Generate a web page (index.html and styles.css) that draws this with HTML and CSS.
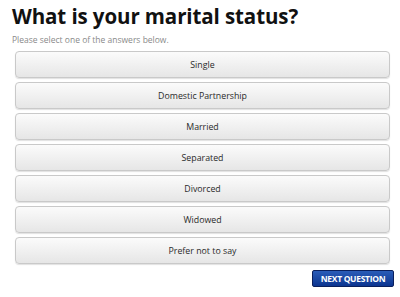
FILE: index.html
```html
<!DOCTYPE html>
<html>
<head>
<meta charset="utf-8">
<link rel="stylesheet" href="styles.css">
</head>
<body>
<div class="page">
  <h1 class="title">What is your marital status?</h1>
  <p class="hint">Please select one of the answers below.</p>
  <div class="answers">
    <div class="answer">Single</div>
    <div class="answer">Domestic Partnership</div>
    <div class="answer">Married</div>
    <div class="answer">Separated</div>
    <div class="answer">Divorced</div>
    <div class="answer">Widowed</div>
    <div class="answer">Prefer not to say</div>
  </div>
  <div class="actions">
    <div class="next">NEXT QUESTION</div>
  </div>
</div>
</body>
</html>
```
FILE: styles.css
```css
html, body {
  margin: 0;
  padding: 0;
  background: #fff;
}
.page {
  width: 400px;
  height: 297px;
  padding: 3px 6px 0 12px;
  box-sizing: border-box;
  font-family: "Open Sans", "DejaVu Sans", sans-serif;
}
.title {
  margin: 0;
  font-size: 20.5px;
  line-height: 27px;
  font-weight: 700;
  color: #111;
  letter-spacing: -0.1px;
}
.hint {
  margin: 4px 0 0 0;
  font-size: 8.5px;
  line-height: 12px;
  color: #8a8a8a;
}
.answers {
  display: flex;
  flex-direction: column;
  gap: 4px;
  margin: 5px 0 0 3px;
  width: 375px;
}
.answer {
  height: 25px;
  border: 1px solid #c9c9c9;
  border-radius: 4px;
  background: linear-gradient(#fbfbfb, #e6e6e6);
  box-shadow: 0 1px 1px rgba(0,0,0,0.12);
  display: flex;
  align-items: center;
  justify-content: center;
  font-size: 8.8px;
  color: #2a2a2a;
}
.actions {
  display: flex;
  justify-content: flex-end;
  margin-top: 6px;
  width: 382px;
}
.next {
  width: 80px;
  height: 15px;
  border: 1px solid #0a1f5c;
  border-radius: 2px;
  background: linear-gradient(#2a5cb8, #0c3590);
  color: #fff;
  font-size: 8.5px;
  font-weight: 700;
  letter-spacing: -0.3px;
  display: flex;
  align-items: center;
  justify-content: center;
}
```
